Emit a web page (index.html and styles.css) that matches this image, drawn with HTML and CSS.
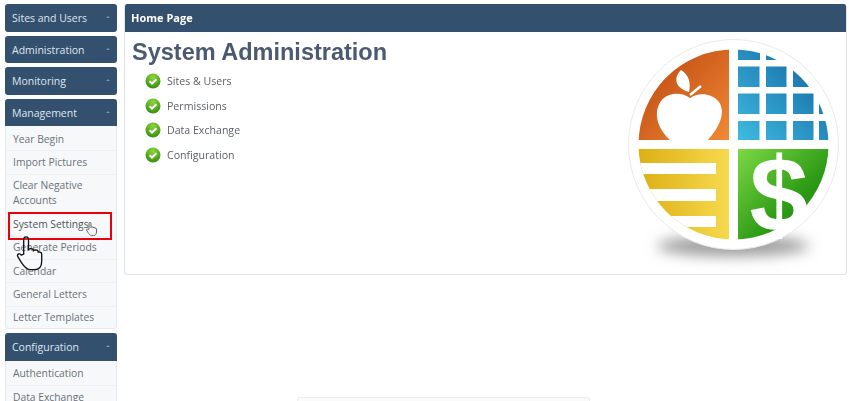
FILE: index.html
```html
<!DOCTYPE html>
<html lang="en">
<head>
  <meta charset="UTF-8">
  <title>System Administration</title>
  <link rel="stylesheet" href="styles.css">
</head>
<body>
  <div class="page">
    <div class="sidebar">
      <div class="group">
        <div class="group-head">Sites and Users<span class="caret"></span></div>
      </div>
      <div class="group">
        <div class="group-head">Administration<span class="caret"></span></div>
      </div>
      <div class="group">
        <div class="group-head">Monitoring<span class="caret"></span></div>
      </div>
      <div class="group">
        <div class="group-head">Management<span class="caret"></span></div>
        <div class="group-items">
          <div class="item">Year Begin</div>
          <div class="item">Import Pictures</div>
          <div class="item">Clear Negative Accounts</div>
          <div class="item item-dark">System Settings</div>
          <div class="item">Generate Periods</div>
          <div class="item">Calendar</div>
          <div class="item">General Letters</div>
          <div class="item">Letter Templates</div>
        </div>
      </div>
      <div class="group">
        <div class="group-head">Configuration<span class="caret"></span></div>
        <div class="group-items">
          <div class="item">Authentication</div>
          <div class="item">Data Exchange</div>
        </div>
      </div>
    </div>

    <div class="main">
      <div class="panel">
        <div class="panel-head">Home Page</div>
        <div class="panel-body">
          <div class="intro">
            <h1>System Administration</h1>
            <ul class="checks">
              <li><svg class="check" viewBox="0 0 16 16"><use href="#check-icon"/></svg>Sites &amp; Users</li>
              <li><svg class="check" viewBox="0 0 16 16"><use href="#check-icon"/></svg>Permissions</li>
              <li><svg class="check" viewBox="0 0 16 16"><use href="#check-icon"/></svg>Data Exchange</li>
              <li><svg class="check" viewBox="0 0 16 16"><use href="#check-icon"/></svg>Configuration</li>
            </ul>
          </div>
          <!-- viewBox uses page coordinates so the numbers line up with the screenshot -->
          <svg class="logo" viewBox="624 34 220 238">
            <defs>
              <clipPath id="disc"><circle cx="733.5" cy="144.5" r="95"/></clipPath>
              <linearGradient id="orange" x1="0" y1="0" x2="1" y2="1">
                <stop offset="0" stop-color="#b9430e"/>
                <stop offset="1" stop-color="#f08a35"/>
              </linearGradient>
              <linearGradient id="blue" gradientUnits="userSpaceOnUse" x1="738" y1="140" x2="828" y2="50">
                <stop offset="0" stop-color="#3fbbe0"/>
                <stop offset="1" stop-color="#0f5f9f"/>
              </linearGradient>
              <linearGradient id="yellow" x1="0" y1="0" x2="1" y2="0">
                <stop offset="0" stop-color="#dcaf14"/>
                <stop offset="1" stop-color="#f7d94e"/>
              </linearGradient>
              <linearGradient id="green" x1="0" y1="0" x2="1" y2="1">
                <stop offset="0" stop-color="#7cd844"/>
                <stop offset="0.6" stop-color="#2c9a15"/>
                <stop offset="1" stop-color="#157c0c"/>
              </linearGradient>
              <filter id="soft" x="-30%" y="-100%" width="160%" height="300%">
                <feGaussianBlur stdDeviation="7"/>
              </filter>
              <radialGradient id="ball" cx="0.5" cy="0.25" r="0.8">
                <stop offset="0" stop-color="#8fd63c"/>
                <stop offset="1" stop-color="#2e8a0c"/>
              </radialGradient>
              <g id="check-icon">
                <circle cx="8" cy="8" r="7.500" fill="url(#ball)"/>
                <path d="M4.600 8.200l2.400 2.300 4.400-4.300" fill="none" stroke="#fff" stroke-width="2"/>
              </g>
            </defs>

            <ellipse cx="733" cy="246" rx="76" ry="10" fill="#999" filter="url(#soft)"/>
            <circle cx="733.5" cy="144.5" r="105" fill="#fff" stroke="#e9e9e9" stroke-width="1"/>

            <g clip-path="url(#disc)">
              <rect x="638" y="49" width="91" height="91" fill="url(#orange)"/>

              <g fill="url(#blue)">
                <rect x="738" y="49" width="22" height="11"/>
                <rect x="766" y="49" width="21" height="11"/>
                <rect x="793" y="49" width="21" height="11"/>
                <rect x="738" y="66.500" width="21.500" height="20.500"/>
                <rect x="766" y="66.500" width="20.500" height="20.500"/>
                <rect x="793" y="66.500" width="20.500" height="20.500"/>
                <rect x="738" y="93.500" width="21.500" height="20.500"/>
                <rect x="766" y="93.500" width="20.500" height="20.500"/>
                <rect x="793" y="93.500" width="20.500" height="20.500"/>
                <rect x="819" y="93.500" width="12" height="20.500"/>
                <rect x="738" y="121" width="21.500" height="19"/>
                <rect x="766" y="121" width="20.500" height="19"/>
                <rect x="793" y="121" width="20.500" height="19"/>
                <rect x="819" y="121" width="12" height="19"/>
              </g>

              <rect x="638" y="149" width="91" height="91" fill="url(#yellow)"/>
              <g fill="#fff">
                <rect x="630" y="163" width="86" height="11"/>
                <rect x="630" y="189" width="86" height="12"/>
                <rect x="630" y="216" width="86" height="11"/>
              </g>

              <rect x="738" y="149" width="91" height="91" fill="url(#green)"/>
            </g>

            <!-- apple -->
            <path fill="#fff" d="M690 98C682 92 668 92 661 101C652 114 659 130 670 140L708 140C717 130 727 114 719 102C712 93 698 92 690 98Z"/>
            <path fill="#fff" d="M681 70C673 78 675 88 689 92C691 83 689 75 681 70Z"/>
            <path fill="none" stroke="#fff" stroke-width="2.500" d="M690 95L701 86"/>

            <text class="dollar" x="779" y="231">$</text>
          </svg>
        </div>
      </div>
    </div>
  </div>

  <!-- video overlay bits sitting on top of the page -->
  <div class="highlight"></div>
  <svg class="hand hand-small" viewBox="0 0 24 30">
    <path fill="#f4f4f4" stroke="#666" stroke-width="2" d="M8 15V4c0-3 4-3 4 0v8c0-2 4-2 4 0v1c0-2 4-2 4 0v1c0-1 3-1 3 1v6c0 4-2 7-6 7h-4c-3 0-5-3-7-6l-3-5c-1-2 2-3 3-1z"/>
  </svg>
  <svg class="hand hand-big" viewBox="0 0 24 30">
    <path fill="#fff" fill-opacity="0.15" stroke="#111" stroke-width="1.100" d="M8 15V3c0-3 4-3 4 0v9c0-2 4-2 4 0v1c0-2 4-2 4 0v1c0-1 3-1 3 1v6c0 4-2 7-6 7h-4c-3 0-5-3-7-6l-3-5c-1-2 2-3 3-1z"/>
  </svg>
  <div class="bottom-bar"></div>
</body>
</html>
```

FILE: styles.css
```css
html, body {
  margin: 0;
  height: 100%;
  overflow: hidden;
  background-color: #ffffff;
}
body {
  font-family: "Open Sans", sans-serif;
  font-size: 10.5px;
  color: #666;
}
.page {
  display: flex;
  gap: 7px;
  padding: 4px 2px 0 5px;
  filter: blur(0.4px);
}
.sidebar {
  width: 112px;
  flex-shrink: 0;
  display: flex;
  flex-direction: column;
  gap: 4px;
}
.group {
  border-radius: 3px;
  overflow: hidden;
}
.group-head {
  height: 27.500px;
  line-height: 28px;
  padding: 0 7px;
  background-color: #34506f;
  color: #dfe6ee;
  font-size: 10.500px;
  position: relative;
}
.caret {
  position: absolute;
  right: 7px;
  top: 12px;
  border-left: 2.500px solid transparent;
  border-right: 2.500px solid transparent;
  border-bottom: 2.500px solid #7d93ab;
}
.group-items {
  padding-top: 2px;
  background-color: #f6f8fa;
  border: 1px solid #e6e9ed;
  border-top: none;
  border-radius: 0 0 3px 3px;
}
.item {
  padding: 3.700px 7px;
  line-height: 15px;
  border-bottom: 1px solid #eef0f3;
  font-size: 10.300px;
  color: #6b7278;
}
.item:last-child {
  padding-bottom: 2.700px;
  border-bottom: none;
}
.item-dark {
  color: #4f555a;
}
.main {
  flex: 1;
}
.panel {
  border: 1px solid #e4e4e4;
  border-top: none;
  border-radius: 3px;
  overflow: hidden;
}
.panel-head {
  height: 28px;
  line-height: 28px;
  margin: 0 -1px;
  padding: 0 7px;
  background-color: #34506f;
  color: #fff;
  font-weight: bold;
  font-size: 11px;
}
.panel-body {
  display: flex;
  justify-content: space-between;
  height: 242px;
}
h1 {
  margin: 7px 0 0 7px;
  font-family: "Liberation Sans", sans-serif;
  font-size: 23.500px;
  line-height: 27px;
  font-weight: bold;
  color: #4b5a70;
}
.checks {
  list-style: none;
  margin: 3px 0 0 21px;
  padding: 0;
}
.checks li {
  display: flex;
  align-items: center;
  gap: 6px;
  height: 24.500px;
  color: #5c6166;
  font-size: 10.600px;
}
.check {
  width: 16px;
  height: 16px;
  margin-left: -1px;
}
.logo {
  width: 220px;
  height: 238px;
  margin: 2px 2px 0 0;
}
.dollar {
  font-family: "Liberation Sans", sans-serif;
  font-weight: bold;
  font-size: 106px;
  fill: #fff;
  text-anchor: middle;
}
.highlight {
  position: absolute;
  left: 8px;
  top: 212px;
  width: 100px;
  height: 24px;
  border: 2px solid #e8000d;
}
.hand {
  position: absolute;
}
.hand-small {
  left: 85px;
  top: 221px;
  width: 12px;
  height: 16px;
}
.hand-big {
  left: 14px;
  top: 236px;
  width: 29px;
  height: 36px;
}
.bottom-bar {
  position: absolute;
  left: 297px;
  top: 397px;
  width: 293px;
  height: 8px;
  background-color: #fafafa;
  border: 1px solid #eee;
  border-radius: 2px;
  box-sizing: border-box;
}
```
